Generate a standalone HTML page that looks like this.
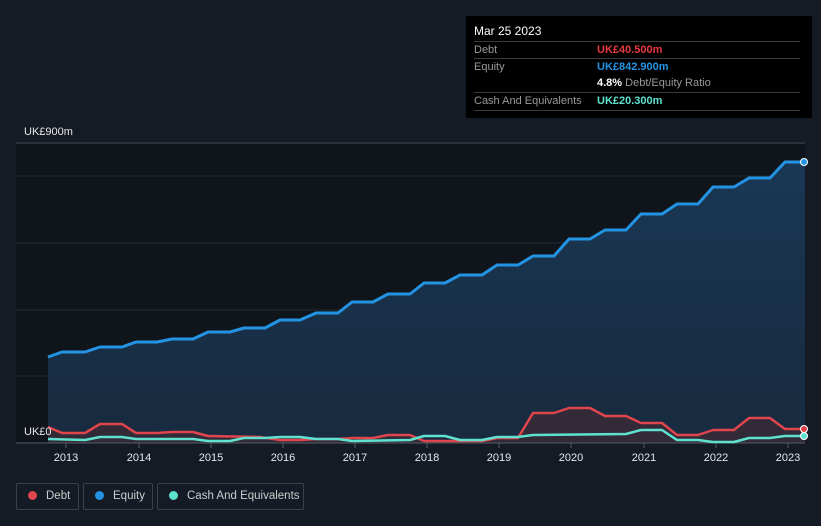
<!DOCTYPE html>
<html><head><meta charset="utf-8"><style>
html,body{margin:0;width:821px;height:526px;overflow:hidden}
body{background:#151b25;font-family:"Liberation Sans",sans-serif;position:relative}
.tt{position:absolute;left:466px;top:16px;width:346px;height:102px;background:#000;color:#ddd;font-size:11px}
.tt .h{position:absolute;left:8px;top:8px;color:#fff;font-size:12px}
.row{position:absolute;left:8px;width:326px;border-top:1px solid #3a3a3a;height:17px;line-height:16px;color:#999}
.row b{font-weight:bold;position:absolute;left:123px}
.leg{position:absolute;top:483px;height:27px;border:1px solid #3b404a;border-radius:2px;color:#ccc;font-size:11.5px;line-height:25px;box-sizing:border-box;white-space:nowrap}
.leg i{display:inline-block;width:9px;height:9px;border-radius:50%;margin:0 9px 0 11px;vertical-align:-1px}
</style></head><body>
<svg width="821" height="526" style="position:absolute;left:0;top:0">
<defs><linearGradient id="g" x1="0" y1="0" x2="0" y2="1"><stop offset="0" stop-color="#1a3b5a" stop-opacity=".9"/><stop offset="1" stop-color="#1a3048" stop-opacity=".8"/></linearGradient></defs>
<rect x="16" y="143" width="789" height="300" fill="#10141b"/>
<line x1="16" y1="143" x2="805" y2="143" stroke="#444a54"/>
<g stroke="#262c36"><line x1="16" y1="176" x2="805" y2="176"/><line x1="16" y1="243" x2="805" y2="243"/><line x1="16" y1="310" x2="805" y2="310"/><line x1="16" y1="376" x2="805" y2="376"/></g>
<path d="M48,357 L62,352 L85,352 L100,347 L122,347 L136,342 L157,342 L172,339 L193,339 L208,332 L230,332 L244,328 L265,328 L280,320 L300,320 L316,313 L338,313 L352,302 L373,302 L388,294 L410,294 L424,283 L445,283 L460,275 L482,275 L497,265 L518,265 L533,256 L554,256 L569,239 L590,239 L605,230 L626,230 L641,214 L662,214 L677,204 L698,204 L713,187 L734,187 L749,178 L770,178 L785,162 L805,162 L805,443 L48,443Z" fill="url(#g)"/>
<path d="M48,427 L62,433 L85,433 L100,424 L122,424 L136,433 L157,433 L172,432 L193,432 L208,436 L260,437 L280,440 L300,440 L316,439 L338,439 L352,438 L373,438 L388,435 L410,435 L424,441 L482,441 L497,438 L518,438 L533,413 L554,413 L569,408 L590,408 L605,416 L626,416 L641,423 L662,423 L677,435 L698,435 L713,430 L734,430 L749,418 L770,418 L785,429 L805,429 L805,443 L48,443Z" fill="#3a2a33" opacity=".8"/>
<line x1="16" y1="443" x2="805" y2="443" stroke="#555b65"/>
<path d="M48,357 L62,352 L85,352 L100,347 L122,347 L136,342 L157,342 L172,339 L193,339 L208,332 L230,332 L244,328 L265,328 L280,320 L300,320 L316,313 L338,313 L352,302 L373,302 L388,294 L410,294 L424,283 L445,283 L460,275 L482,275 L497,265 L518,265 L533,256 L554,256 L569,239 L590,239 L605,230 L626,230 L641,214 L662,214 L677,204 L698,204 L713,187 L734,187 L749,178 L770,178 L785,162 L805,162" fill="none" stroke="#2394e3" stroke-width="3" stroke-linejoin="round"/>
<path d="M48,427 L62,433 L85,433 L100,424 L122,424 L136,433 L157,433 L172,432 L193,432 L208,436 L260,437 L280,440 L300,440 L316,439 L338,439 L352,438 L373,438 L388,435 L410,435 L424,441 L482,441 L497,438 L518,438 L533,413 L554,413 L569,408 L590,408 L605,416 L626,416 L641,423 L662,423 L677,435 L698,435 L713,430 L734,430 L749,418 L770,418 L785,429 L805,429" fill="none" stroke="#e0454d" stroke-width="2.5" stroke-linejoin="round"/>
<path d="M48,439 L85,440 L100,437 L122,437 L136,439 L193,439 L208,441 L230,441 L244,438 L265,438 L280,437 L300,437 L316,439 L338,439 L352,441 L410,440 L424,436 L445,436 L460,440 L482,440 L497,437 L518,437 L533,435 L626,434 L641,430 L662,430 L677,440 L698,440 L713,442 L734,442 L749,438 L770,438 L785,436 L805,436" fill="none" stroke="#5ee2cf" stroke-width="2.5" stroke-linejoin="round"/>
<circle cx="804" cy="162" r="3.5" fill="#2394e3" stroke="#fff" stroke-width="1"/>
<circle cx="804" cy="429" r="3.5" fill="#e0454d" stroke="#fff" stroke-width="1"/>
<circle cx="804" cy="436" r="3.5" fill="#5ee2cf" stroke="#fff" stroke-width="1"/>
<g stroke="#555b65"><line x1="66" y1="443" x2="66" y2="448"/><line x1="139" y1="443" x2="139" y2="448"/><line x1="211" y1="443" x2="211" y2="448"/><line x1="283" y1="443" x2="283" y2="448"/><line x1="355" y1="443" x2="355" y2="448"/><line x1="427" y1="443" x2="427" y2="448"/><line x1="499" y1="443" x2="499" y2="448"/><line x1="571" y1="443" x2="571" y2="448"/><line x1="644" y1="443" x2="644" y2="448"/><line x1="716" y1="443" x2="716" y2="448"/><line x1="788" y1="443" x2="788" y2="448"/></g>
<g fill="#e6e6e6" font-family="Liberation Sans" font-size="11" text-anchor="middle">
<text x="66" y="461">2013</text><text x="139" y="461">2014</text><text x="211" y="461">2015</text><text x="283" y="461">2016</text><text x="355" y="461">2017</text><text x="427" y="461">2018</text><text x="499" y="461">2019</text><text x="571" y="461">2020</text><text x="644" y="461">2021</text><text x="716" y="461">2022</text><text x="788" y="461">2023</text>
</g>
<text x="24" y="135" fill="#e6e6e6" font-size="11" font-family="Liberation Sans">UK£900m</text>
<text x="24" y="435" fill="#e6e6e6" font-size="11" font-family="Liberation Sans">UK£0</text>
</svg>
<div class="tt">
<div class="h">Mar 25 2023</div>
<div class="row" style="top:25px">Debt<b style="color:#e8393f">UK£40.500m</b></div>
<div class="row" style="top:42px">Equity<b style="color:#2394e3">UK£842.900m</b></div>
<div class="row" style="top:59px;border-top:none"><b style="color:#fff">4.8% <span style="color:#999;font-weight:normal">Debt/Equity Ratio</span></b></div>
<div class="row" style="top:76px">Cash And Equivalents<b style="color:#5ee2cf">UK£20.300m</b></div>
<div class="row" style="top:94px;height:0"></div>
</div>
<div class="leg" style="left:16px;width:63px"><i style="background:#e0454d"></i>Debt</div>
<div class="leg" style="left:83px;width:70px"><i style="background:#2394e3"></i>Equity</div>
<div class="leg" style="left:157px;width:147px"><i style="background:#5ee2cf"></i>Cash And Equivalents</div>
</body></html>
